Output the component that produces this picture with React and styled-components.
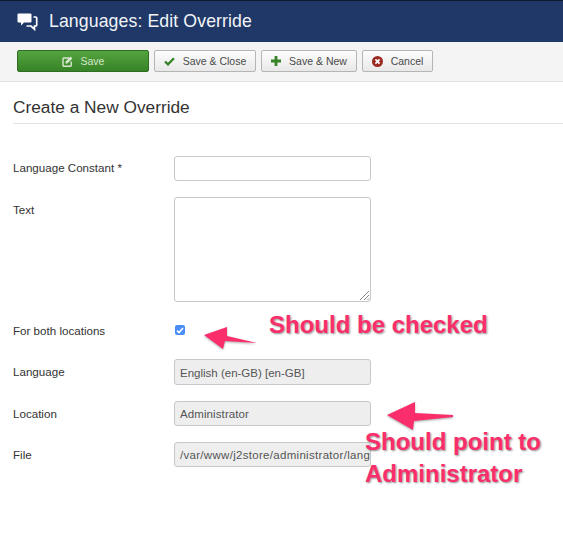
import React from 'react';
import styled, { createGlobalStyle } from 'styled-components';

const GlobalStyle = createGlobalStyle`
  html, body {
    margin: 0;
    padding: 0;
    background: #fff;
    font-family: "Liberation Sans", Arial, sans-serif;
  }
`;

const Page = styled.div`
  position: relative;
  width: 563px;
  height: 560px;
  overflow: hidden;
`;

const Header = styled.header`
  box-sizing: border-box;
  height: 42px;
  background: #1f3867;
  border-top: 1px solid #0f1a30;
  display: flex;
  align-items: center;
  padding-left: 17px;
  gap: 11px;
  color: #fff;
`;

const HeaderTitle = styled.h1`
  margin: 0;
  font-size: 17.7px;
  font-weight: 400;
  color: #f2f4f8;
  letter-spacing: 0.1px;
`;

const Toolbar = styled.div`
  box-sizing: border-box;
  height: 40px;
  background: #f4f4f4;
  border-bottom: 1px solid #e3e3e3;
  display: flex;
  align-items: flex-start;
  padding: 8px 0 0 17px;
  gap: 5px;
`;

const Button = styled.button`
  box-sizing: border-box;
  width: ${p => p.$width}px;
  height: 22px;
  margin: 0;
  padding: 0;
  display: flex;
  align-items: center;
  justify-content: center;
  gap: 8px;
  font-family: inherit;
  font-size: 10.5px;
  border-radius: 2px;
  color: ${p => (p.$primary ? '#d5e6cd' : '#4a4a4a')};
  background: ${p => (p.$primary
    ? 'linear-gradient(#54a43f, #378327)'
    : 'linear-gradient(#fdfdfd, #e8e8e8)')};
  border: 1px solid ${p => (p.$primary ? '#2f6e22' : '#b5b5b5')};
`;

const Content = styled.main`
  padding: 0 0 0 13px;
`;

const PageTitle = styled.h2`
  margin: 0;
  height: 42px;
  box-sizing: border-box;
  padding-top: 15px;
  font-size: 17.3px;
  line-height: 20px;
  font-weight: 400;
  color: #333;
  border-bottom: 1px solid #e2e2e2;
`;

const Form = styled.form`
  display: flex;
  flex-direction: column;
  margin-top: 32px;
`;

const Row = styled.div`
  display: flex;
  align-items: flex-start;
  margin-bottom: ${p => p.$gap}px;
`;

const Label = styled.label`
  width: 161px;
  flex: none;
  font-size: 11.6px;
  line-height: 14px;
  color: #333;
  padding-top: ${p => p.$top}px;
`;

const TextInput = styled.div`
  box-sizing: border-box;
  width: 197px;
  height: ${p => p.$height}px;
  background: ${p => (p.$disabled ? '#eeeeee' : '#fff')};
  border: 1px solid #c8c8c8;
  border-radius: 3px;
  padding: 0 0 0 5px;
  font-size: 11.5px;
  letter-spacing: ${p => p.$spacing || 0}px;
  line-height: ${p => p.$height}px;
  color: #555;
  white-space: nowrap;
  overflow: hidden;
  position: relative;
`;

const Grip = styled.svg`
  position: absolute;
  right: 0;
  bottom: 0;
`;

const CheckBox = styled.span`
  width: 10px;
  height: 10px;
  margin: 1px 0 0 1px;
  border-radius: 2px;
  background: #4a8df6;
  display: flex;
  align-items: center;
  justify-content: center;
`;

const Note = styled.div`
  position: absolute;
  left: ${p => p.$x}px;
  top: ${p => p.$y}px;
  font-size: 24px;
  line-height: 32px;
  font-weight: 700;
  color: #fb2e6c;
  white-space: nowrap;
  text-shadow: 1px 1px 2px rgba(0, 0, 0, 0.45);
`;

const Arrow = styled.svg`
  position: absolute;
  left: ${p => p.$x}px;
  top: ${p => p.$y}px;
  filter: drop-shadow(0 1px 1px rgba(0, 0, 0, 0.35));
`;

const CommentsIcon = () => (
  <svg width="21" height="20" viewBox="0 0 21 20">
    <path d="M1.5 1.5h12a1 1 0 0 1 1 1v7a1 1 0 0 1-1 1H7l-3 3v-3H1.5a1 1 0 0 1-1-1v-7a1 1 0 0 1 1-1z" fill="#fff" />
    <path d="M16.5 5h2.2a1 1 0 0 1 1 1v7a1 1 0 0 1-1 1h-1.2v3.2L14 14H9.5" fill="none" stroke="#fff" strokeWidth="1.7" />
  </svg>
);

const EditIcon = () => (
  <svg width="11" height="11" viewBox="0 0 11 11">
    <path d="M7 2H1.6a.6.6 0 0 0-.6.6v7a.6.6 0 0 0 .6.6h7a.6.6 0 0 0 .6-.6V5.5" fill="none" stroke="#d9e8d2" strokeWidth="1.4" />
    <path d="M3.5 5.7 8.6.6l1.8 1.8-5.1 5.1H3.5z" fill="#d9e8d2" />
  </svg>
);

const CheckIcon = () => (
  <svg width="11" height="9" viewBox="0 0 11 9">
    <path d="M1 4.5 4 7.4 10 1.2" fill="none" stroke="#378327" strokeWidth="2.3" />
  </svg>
);

const PlusIcon = () => (
  <svg width="10" height="10" viewBox="0 0 10 10">
    <path d="M5 0v10M0 5h10" stroke="#378327" strokeWidth="2.8" />
  </svg>
);

const CancelIcon = () => (
  <svg width="11" height="11" viewBox="0 0 11 11">
    <circle cx="5.5" cy="5.5" r="5.5" fill="#9a2a22" />
    <path d="M3.4 3.4l4.2 4.2M7.6 3.4 3.4 7.6" stroke="#fff" strokeWidth="1.7" />
  </svg>
);

const App = () => (
  <Page>
    <GlobalStyle />
    <Header>
      <CommentsIcon />
      <HeaderTitle>Languages: Edit Override</HeaderTitle>
    </Header>
    <Toolbar>
      <Button $primary $width={132}><EditIcon />Save</Button>
      <Button $width={102}><CheckIcon />Save &amp; Close</Button>
      <Button $width={96}><PlusIcon />Save &amp; New</Button>
      <Button $width={71}><CancelIcon />Cancel</Button>
    </Toolbar>
    <Content>
      <PageTitle>Create a New Override</PageTitle>
      <Form>
        <Row $gap={16}>
          <Label $top={5}>Language Constant *</Label>
          <TextInput $height={25} />
        </Row>
        <Row $gap={22}>
          <Label $top={6}>Text</Label>
          <TextInput $height={105}>
            <Grip width="12" height="12" viewBox="0 0 12 12">
              <path d="M2 11 11 2M6 11l5-5M9.5 11l1.5-1.5" stroke="#888" strokeWidth="1" />
            </Grip>
          </TextInput>
        </Row>
        <Row $gap={21}>
          <Label $top={0}>For both locations</Label>
          <CheckBox>
            <svg width="8" height="7" viewBox="0 0 8 7">
              <path d="M1 3.6 3 5.6 7 1" fill="none" stroke="#fff" strokeWidth="1.6" />
            </svg>
          </CheckBox>
        </Row>
        <Row $gap={16}>
          <Label $top={6}>Language</Label>
          <TextInput $disabled $height={26}>English (en-GB) [en-GB]</TextInput>
        </Row>
        <Row $gap={16}>
          <Label $top={6}>Location</Label>
          <TextInput $disabled $height={25} $spacing={0.1}>Administrator</TextInput>
        </Row>
        <Row $gap={0}>
          <Label $top={6}>File</Label>
          <TextInput $disabled $height={25} $spacing={0.3}>/var/www/j2store/administrator/language/overrides/en-GB.override.ini</TextInput>
        </Row>
      </Form>
    </Content>

    <Arrow $x={203} $y={322} width="57" height="30" viewBox="0 0 57 30">
      <path d="M1 13 24 5 24 14 54 21 22 19 20 27z" fill="#fb2e6c" />
    </Arrow>
    <Note $x={269} $y={309}>Should be checked</Note>
    <Arrow $x={385} $y={400} width="72" height="32" viewBox="0 0 72 32">
      <path d="M2 15 30 2 30 13 68 15 68 17 29 21 28 30z" fill="#fb2e6c" />
    </Arrow>
    <Note $x={365} $y={426}>Should point to</Note>
    <Note $x={365} $y={458}>Administrator</Note>
  </Page>
);

export default App;
